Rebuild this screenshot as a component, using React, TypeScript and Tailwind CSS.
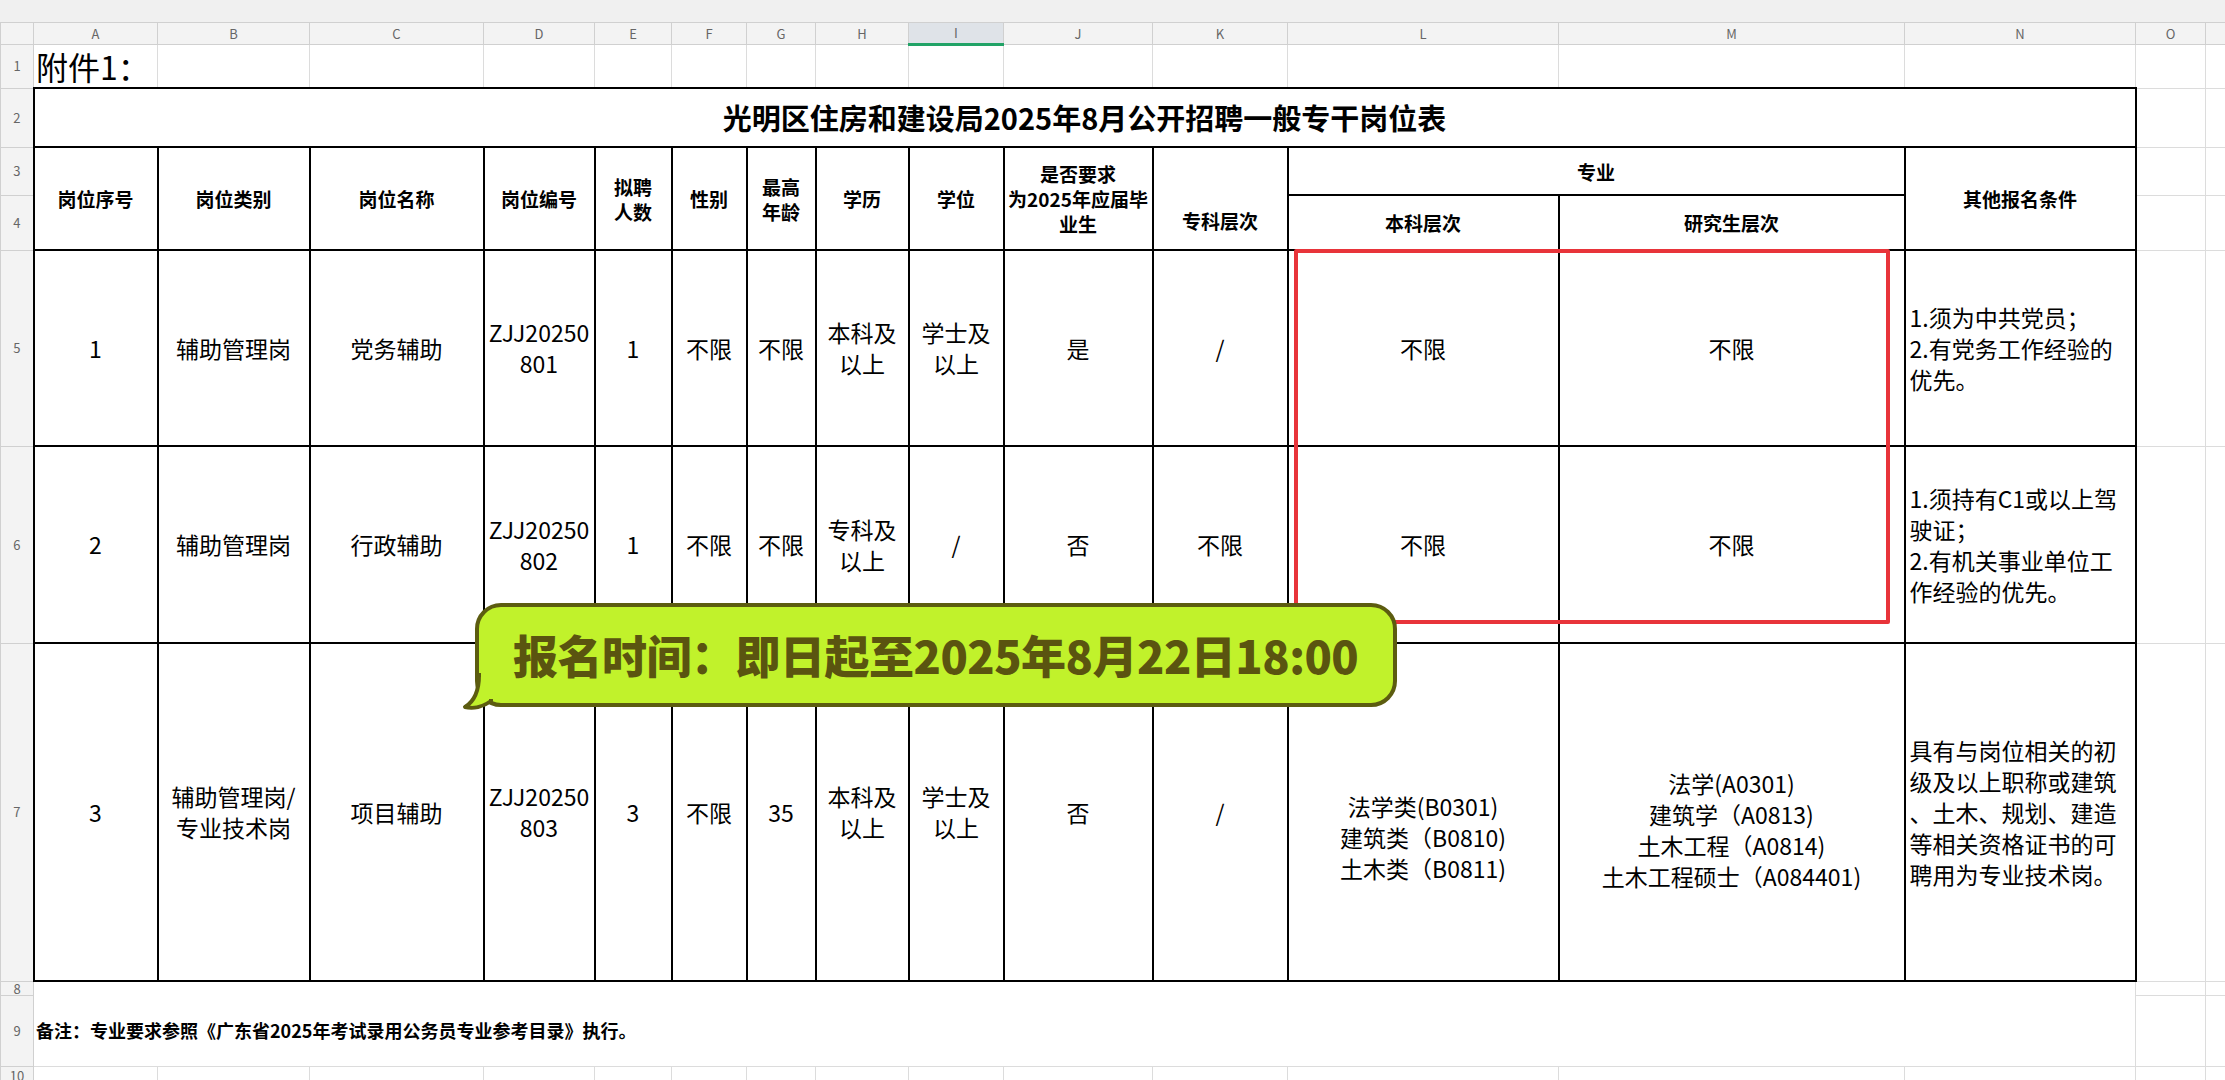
import React from "react";

const cols = [33, 124, 152, 174, 111, 77, 75, 69, 93, 95, 149, 135, 271, 346, 231, 70, 20];
const letters = ["", "A", "B", "C", "D", "E", "F", "G", "H", "I", "J", "K", "L", "M", "N", "O", ""];

const B = "border-[2px] border-black";
const G = "border border-[#dcdcdc]";
const rn = "border border-[#d0d0d0] bg-[#f3f3f3] text-[13px] text-[#666] text-center align-middle";
const hd = `${B} text-center align-middle font-bold text-[19px] leading-[25px]`;
const td = `${B} text-center align-middle text-[23px] leading-[31px]`;

export default function App() {
  return (
    <div className="relative w-[2225px] h-[1080px] overflow-hidden bg-white" style={{ fontFamily: '"Noto Sans CJK SC", "Noto Sans", sans-serif' }}>
      <div className="h-[22px] bg-[#f0f0f0]" />
      <table className="border-collapse table-fixed" style={{ width: cols.reduce((a, b) => a + b, 0) }}>
        <colgroup>
          {cols.map((w, i) => (
            <col key={i} style={{ width: w }} />
          ))}
        </colgroup>
        <tbody className="text-black">
          <tr className="h-[20px]">
            {letters.map((l, i) => (
              <td
                key={i}
                className={`border border-[#d0d0d0] text-center text-[13px] text-[#666] p-0 ${i === 9 ? "bg-[#dfe3e8] border-b-[3px] border-b-[#21a366]" : "bg-[#f3f3f3]"}`}
              >
                {l}
              </td>
            ))}
          </tr>
          <tr className="h-[44px]">
            <td className={rn}>1</td>
            <td className={`${G} text-[32px] leading-none whitespace-nowrap overflow-visible pl-0.5`}>附件1：</td>
            {Array.from({ length: 15 }).map((_, i) => (
              <td key={i} className={G} />
            ))}
          </tr>
          <tr className="h-[59px]">
            <td className={rn}>2</td>
            <td colSpan={14} className={`${B} text-center font-bold text-[29px]`}>光明区住房和建设局2025年8月公开招聘一般专干岗位表</td>
            <td className={G} />
            <td className={G} />
          </tr>
          <tr className="h-[48px]">
            <td className={rn}>3</td>
            <td rowSpan={2} className={hd}>岗位序号</td>
            <td rowSpan={2} className={hd}>岗位类别</td>
            <td rowSpan={2} className={hd}>岗位名称</td>
            <td rowSpan={2} className={hd}>岗位编号</td>
            <td rowSpan={2} className={hd}>拟聘<br />人数</td>
            <td rowSpan={2} className={hd}>性别</td>
            <td rowSpan={2} className={hd}>最高<br />年龄</td>
            <td rowSpan={2} className={hd}>学历</td>
            <td rowSpan={2} className={hd}>学位</td>
            <td rowSpan={2} className={`${hd} text-[17px] leading-[23px]`}>是否要求<br />为2025年应届毕<br />业生</td>
            <td rowSpan={2} className={`${hd} pt-[44px]`}>专科层次</td>
            <td colSpan={2} className={hd}>专业</td>
            <td rowSpan={2} className={hd}>其他报名条件</td>
            <td className={G} />
            <td className={G} />
          </tr>
          <tr className="h-[55px]">
            <td className={rn}>4</td>
            <td className={hd}>本科层次</td>
            <td className={hd}>研究生层次</td>
            <td className={G} />
            <td className={G} />
          </tr>
          <tr className="h-[196px]">
            <td className={rn}>5</td>
            <td className={td}>1</td>
            <td className={td}>辅助管理岗</td>
            <td className={td}>党务辅助</td>
            <td className={td}>ZJJ20250<br />801</td>
            <td className={td}>1</td>
            <td className={td}>不限</td>
            <td className={td}>不限</td>
            <td className={td}>本科及<br />以上</td>
            <td className={td}>学士及<br />以上</td>
            <td className={td}>是</td>
            <td className={td}>/</td>
            <td className={td}>不限</td>
            <td className={td}>不限</td>
            <td className={`${td} text-left pl-1`}>1.须为中共党员；<br />2.有党务工作经验的<br />优先。</td>
            <td className={G} />
            <td className={G} />
          </tr>
          <tr className="h-[197px]">
            <td className={rn}>6</td>
            <td className={td}>2</td>
            <td className={td}>辅助管理岗</td>
            <td className={td}>行政辅助</td>
            <td className={td}>ZJJ20250<br />802</td>
            <td className={td}>1</td>
            <td className={td}>不限</td>
            <td className={td}>不限</td>
            <td className={td}>专科及<br />以上</td>
            <td className={td}>/</td>
            <td className={td}>否</td>
            <td className={td}>不限</td>
            <td className={td}>不限</td>
            <td className={td}>不限</td>
            <td className={`${td} text-left pl-1`}>1.须持有C1或以上驾<br />驶证；<br />2.有机关事业单位工<br />作经验的优先。</td>
            <td className={G} />
            <td className={G} />
          </tr>
          <tr className="h-[338px]">
            <td className={rn}>7</td>
            <td className={td}>3</td>
            <td className={td}>辅助管理岗/<br />专业技术岗</td>
            <td className={td}>项目辅助</td>
            <td className={td}>ZJJ20250<br />803</td>
            <td className={td}>3</td>
            <td className={td}>不限</td>
            <td className={td}>35</td>
            <td className={td}>本科及<br />以上</td>
            <td className={td}>学士及<br />以上</td>
            <td className={td}>否</td>
            <td className={td}>/</td>
            <td className={`${td} pt-[50px]`}>法学类(B0301)<br />建筑类（B0810)<br />土木类（B0811)</td>
            <td className={`${td} pt-[36px]`}>法学(A0301)<br />建筑学（A0813)<br />土木工程（A0814)<br />土木工程硕士（A084401)</td>
            <td className={`${td} text-left pl-1`}>具有与岗位相关的初<br />级及以上职称或建筑<br />、土木、规划、建造<br />等相关资格证书的可<br />聘用为专业技术岗。</td>
            <td className={G} />
            <td className={G} />
          </tr>
          <tr className="h-[14px]">
            <td className={`${rn} text-[11px] leading-none`}>8</td>
            <td colSpan={14} className="border-0" />
            <td className={G} />
            <td className={G} />
          </tr>
          <tr className="h-[71px]">
            <td className={rn}>9</td>
            <td colSpan={14} className="border-0 font-bold text-[18px] whitespace-nowrap pl-0.5">备注：专业要求参照《广东省2025年考试录用公务员专业参考目录》执行。</td>
            <td className={G} />
            <td className={G} />
          </tr>
          <tr className="h-[20px]">
            <td className={`${rn} text-[12px] leading-[14px]`}>10</td>
            {Array.from({ length: 16 }).map((_, i) => (
              <td key={i} className={G} />
            ))}
          </tr>
        </tbody>
      </table>

      <div className="absolute left-[1294px] top-[249px] w-[596px] h-[375px] border-[4px] border-[#e8343a] rounded-[2px] pointer-events-none" />

      <div className="absolute left-[461px] top-[603px] w-[936px] h-[104px]">
        <div className="absolute left-[14px] top-0 right-0 bottom-0 rounded-[26px] bg-[#c1f22b] border-[4px] border-[#5c5c10] flex items-center pl-[34px]">
          <span className="text-[45px] font-black text-[#5a5410] tracking-[-0.5px] whitespace-nowrap">报名时间：即日起至2025年8月22日18:00</span>
        </div>
        <svg className="absolute left-0 bottom-[-6px]" width="40" height="40" viewBox="0 0 40 40">
          <path d="M18 2 C18 18 14 28 4 34 C12 36 22 34 30 28 L30 2 Z" fill="#c1f22b" stroke="#5c5c10" strokeWidth="4" strokeLinejoin="round" />
          <rect x="20" y="0" width="16" height="26" fill="#c1f22b" />
        </svg>
      </div>
    </div>
  );
}
